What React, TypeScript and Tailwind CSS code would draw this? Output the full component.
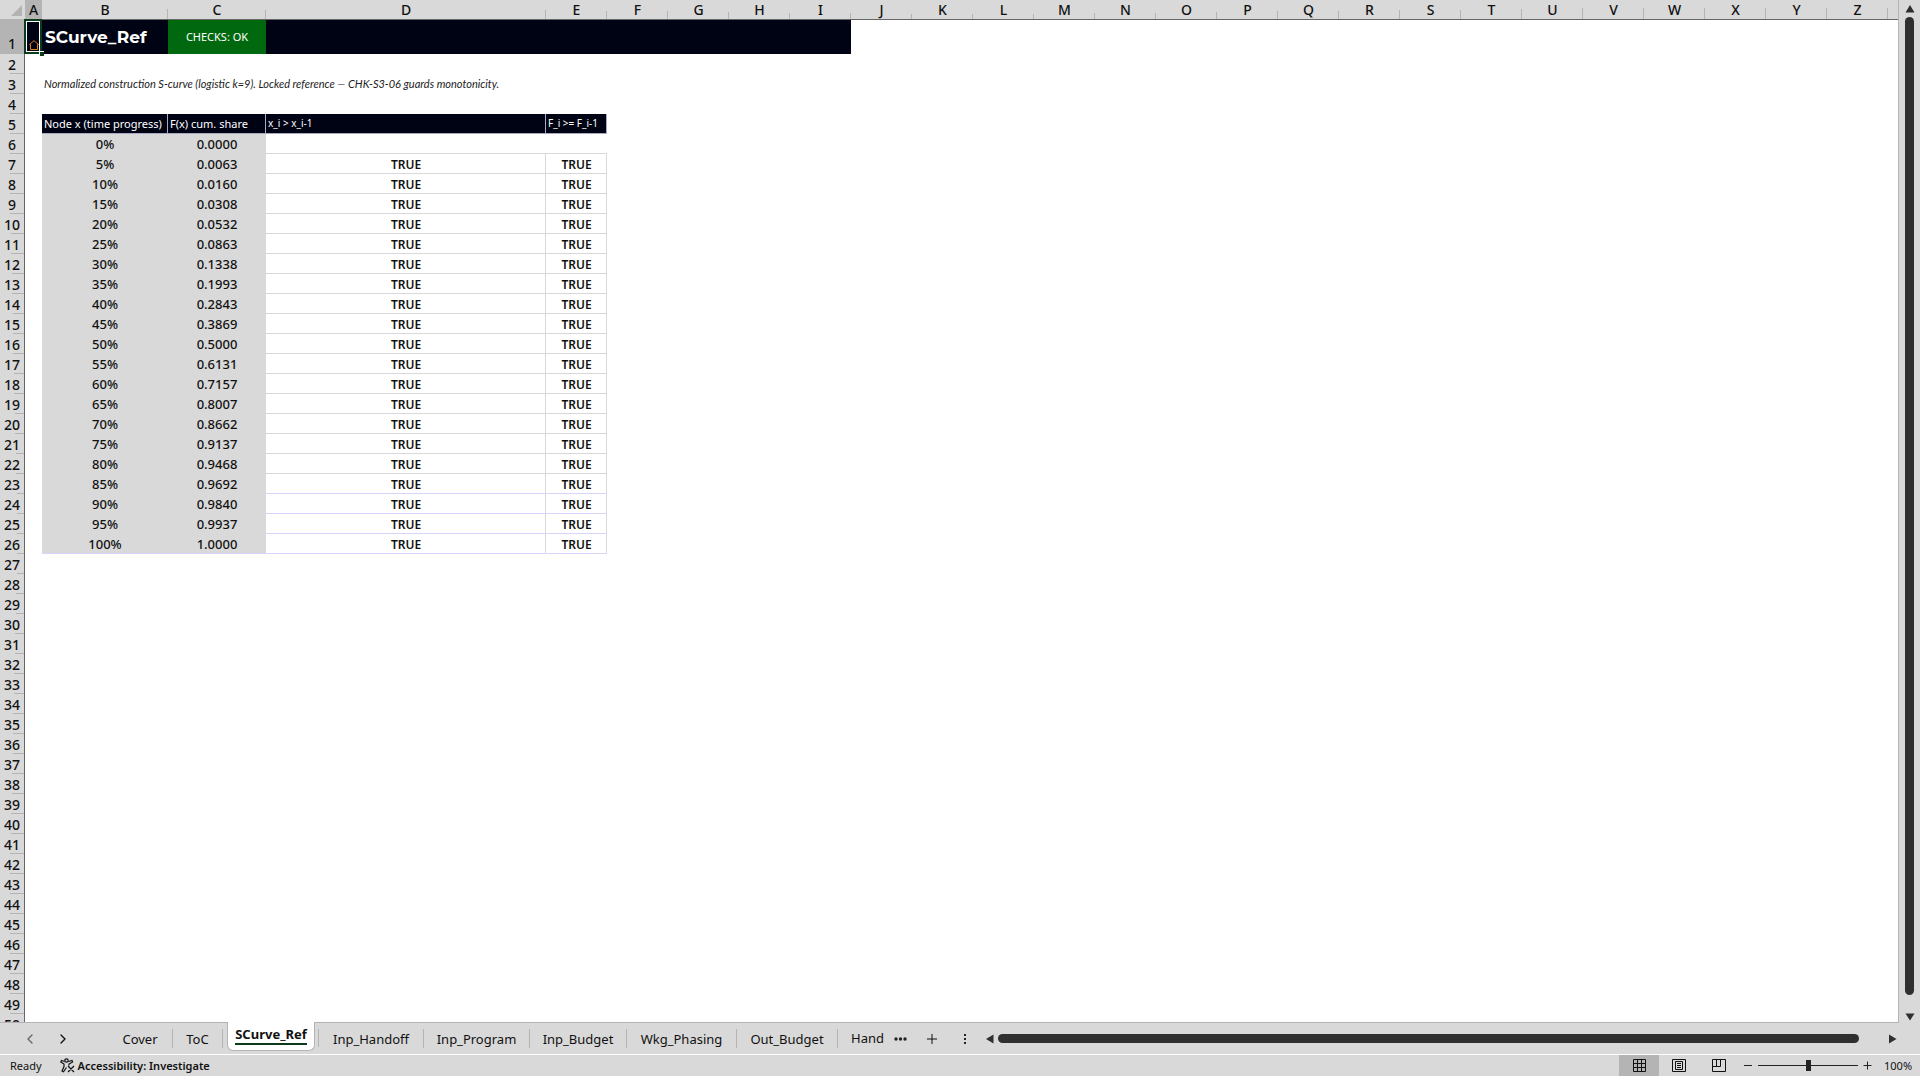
import type { CSSProperties } from "react";
import { ChevronLeft, ChevronRight, Plus } from "lucide-react";
import clsx from "clsx";

const columns = "ABCDEFGHIJKLMNOPQRSTUVWXYZ".split("");
const rowNumbers = Array.from({ length: 50 }, (_, i) => i + 1);

const shares = [
  "0.0000", "0.0063", "0.0160", "0.0308", "0.0532", "0.0863", "0.1338",
  "0.1993", "0.2843", "0.3869", "0.5000", "0.6131", "0.7157", "0.8007",
  "0.8662", "0.9137", "0.9468", "0.9692", "0.9840", "0.9937", "1.0000",
];

const nodes = shares.map((share, i) => ({ row: i + 6, node: `${i * 5}%`, share }));

const columnWidths: Record<string, string> = {
  A: "w-[17px]",
  B: "w-[126px]",
  C: "w-[98px]",
  D: "w-[280px]",
};

// header dividers shrink towards the middle of the sheet
const tickHeight = (i: number) => Math.min(11, 5 + Math.floor(Math.abs(i - 10) * 0.6));
const tickWidth = (row: number) => Math.min(14, 7 + Math.floor(Math.abs(row - 25) * 0.45));

function ColumnHeaders() {
  return (
    <thead>
      <tr className="h-5">
        <td className="relative border-b border-[#b4b4b4] bg-[#d9d9d9]">
          <svg className="absolute bottom-[3px] right-[3px]" width="11" height="11" aria-hidden="true">
            <path d="M11 0V11H0Z" fill="#b3b3b3" />
          </svg>
        </td>
        {columns.map((name, i) => (
          <th
            key={name}
            scope="col"
            className={clsx(
              "relative border-b border-[#666] p-0 text-[14px] font-medium leading-[19px]",
              name === "A" ? "bg-[#b4b4b4]" : "bg-[#d9d9d9]"
            )}
          >
            {name}
            <span
              className="absolute bottom-0 right-0 w-px bg-[#b4b4b4]"
              style={{ height: tickHeight(i) } as CSSProperties}
            />
          </th>
        ))}
        <td className="border-b border-[#666] bg-[#d9d9d9]" />
      </tr>
    </thead>
  );
}

function RowHeader({ row }: { row: number }) {
  return (
    <th
      scope="row"
      className={clsx(
        "relative border-r border-[#666] p-0 text-center align-bottom text-[14px] font-medium leading-[19px]",
        row === 1 ? "bg-[#b4b4b4] pb-px" : "bg-[#d9d9d9]"
      )}
    >
      {row}
      <span
        className="absolute bottom-0 right-0 h-px bg-[#b4b4b4]"
        style={{ width: tickWidth(row) } as CSSProperties}
      />
    </th>
  );
}

function TitleCells() {
  return (
    <>
      <td className="relative bg-[#000314] p-0">
        <a
          href="#toc"
          aria-label="Back to contents"
          className="absolute -left-px -top-px flex h-[35px] w-[18px] items-end justify-end border-2 border-[#0c3b1b] outline-1 -outline-offset-3 outline-white"
        >
          <svg width="10" height="10" viewBox="0 0 10 10" fill="none" stroke="#e07b10" className="mb-0.5 mr-px shrink-0" aria-hidden="true">
            <path d="M1.5 9.500V4.500H.5L5 .7L9.500 4.500H8.500V9.500Z" />
          </svg>
        </a>
        <span className="absolute -bottom-0.5 -right-0.5 z-10 size-[5px] border-l border-t border-white bg-[#0c3b1b]" />
      </td>
      <td className="bg-[#000314] p-0 pb-px pl-[3px] font-['Montserrat','Inter',sans-serif] text-[17px] font-bold leading-6 text-white">
        SCurve_Ref
      </td>
      <td className="bg-[#00690f] p-0 text-center text-[11px] text-white">CHECKS: OK</td>
      <td colSpan={6} className="bg-[#000314]" />
    </>
  );
}

function HeadingCells() {
  const cell = "whitespace-nowrap border-b border-r border-[#a9a9c0] bg-[#000314] p-0 pl-0.5 text-left leading-[19px] text-white";
  return (
    <>
      <td />
      <td className={clsx(cell, "text-[11px]")}>Node x (time progress)</td>
      <td className={clsx(cell, "text-[11px]")}>F(x) cum. share</td>
      <td className={clsx(cell, "text-[10px]")}>x_i &gt; x_i-1</td>
      <td className={clsx(cell, "text-[10px]")}>F_i &gt;= F_i-1</td>
    </>
  );
}

function NodeCells({ row, node, share }: { row: number; node: string; share: string }) {
  const line = row > 22 ? "border-b-[#d6d6fa]" : "border-b-[#d9d9d9]";
  const value = clsx(
    "border-b bg-[#d9d9d9] p-0 pt-0.5 text-center text-[13px] font-medium leading-[17px]",
    row === 26 ? "border-b-[#d6d6fa]" : "border-b-[#d9d9d9]"
  );
  const check = clsx(
    "border-b border-r border-r-[#d9d9d9] p-0 pt-0.5 pl-px text-center text-[12px] font-semibold leading-[17px]",
    line
  );
  return (
    <>
      <td />
      <td className={value}>{node}</td>
      <td className={value}>{share}</td>
      {row === 6 ? (
        <td colSpan={2} className="border-b border-b-[#d9d9d9]" />
      ) : (
        <>
          <td className={check}>TRUE</td>
          <td className={check}>TRUE</td>
        </>
      )}
    </>
  );
}

function Sheet() {
  return (
    <div className="min-w-0 flex-1 overflow-hidden border-b border-r border-[#b4b4b4] bg-white">
      <table className="w-full table-fixed border-separate border-spacing-0">
        <colgroup>
          <col className="w-[25px]" />
          {columns.map((name) => (
            <col key={name} className={columnWidths[name] ?? "w-[61px]"} />
          ))}
          <col />
        </colgroup>
        <ColumnHeaders />
        <tbody>
          {rowNumbers.map((row) => {
            const data = nodes.find((n) => n.row === row);
            return (
              <tr key={row} className={row === 1 ? "h-[34px]" : "h-5"}>
                <RowHeader row={row} />
                {row === 1 && <TitleCells />}
                {row === 3 && (
                  <>
                    <td />
                    <td colSpan={8} className="p-0 pl-0.5 font-['Lato',sans-serif] text-[11px] italic leading-[18px] text-[#222]">
                      Normalized construction S-curve (logistic k=9). Locked reference — CHK-S3-06 guards monotonicity.
                    </td>
                  </>
                )}
                {row === 5 && <HeadingCells />}
                {data && <NodeCells {...data} />}
              </tr>
            );
          })}
        </tbody>
      </table>
    </div>
  );
}

function VerticalScroll() {
  return (
    <div className="flex w-[21px] shrink-0 flex-col items-center pb-0.5 pt-[5px]">
      <button type="button" aria-label="Scroll up">
        <svg width="10" height="8" className="block"><path d="M5 0L9.500 7.500H.5Z" fill="#2f2f2f" /></svg>
      </button>
      <div className="mt-1 w-[9px] flex-1 rounded-full bg-[#2f2f2f]" />
      <button type="button" aria-label="Scroll down" className="mt-[18px]">
        <svg width="10" height="8" className="block"><path d="M5 7.500L9.500 .5H.5Z" fill="#2f2f2f" /></svg>
      </button>
    </div>
  );
}

const tabs = [
  { name: "Cover", width: "w-[65px]" },
  { name: "ToC", width: "w-[50px]" },
  { name: "SCurve_Ref", width: "w-[96px]" },
  { name: "Inp_Handoff", width: "w-[105px]" },
  { name: "Inp_Program", width: "w-[106px]" },
  { name: "Inp_Budget", width: "w-[97px]" },
  { name: "Wkg_Phasing", width: "w-[110px]" },
  { name: "Out_Budget", width: "w-[101px]" },
];

function TabBar() {
  return (
    <nav aria-label="Sheets" className="flex h-[31px] shrink-0 items-center text-[13px] leading-5">
      <button type="button" aria-label="Previous sheet" className="ml-[22px] text-[#666]">
        <ChevronLeft size={16} strokeWidth={2} />
      </button>
      <button type="button" aria-label="Next sheet" className="ml-[17px]">
        <ChevronRight size={16} strokeWidth={2} />
      </button>
      <div className="ml-[37px] flex h-full">
        {tabs.map(({ name, width }) =>
          name === "SCurve_Ref" ? (
            <div key={name} className={clsx("flex items-start", width)}>
              <button
                type="button"
                aria-current="page"
                className="-mt-px ml-1 h-[29px] w-[88px] rounded-b-md border border-t-0 border-[#b4b4b4] bg-white pb-1 font-bold"
              >
                <span className="border-b-2 border-[#0c3b1b]">{name}</span>
              </button>
              <i className="ml-[3px] mt-1.5 h-[18px] w-px bg-[#b4b4b4]" />
            </div>
          ) : (
            <button key={name} type="button" className={clsx("my-1.5 border-r border-[#b4b4b4] pb-0.5", width)}>
              {name}
            </button>
          )
        )}
        <button type="button" className="ml-[13px] pb-0.5">Hand</button>
      </div>
      <button type="button" aria-label="More sheets" className="ml-2.5">
        <svg width="13" height="4" className="block" fill="#222"><circle cx="2" cy="2" r="1.700" /><circle cx="6.500" cy="2" r="1.700" /><circle cx="11" cy="2" r="1.700" /></svg>
      </button>
      <button type="button" aria-label="New sheet" className="ml-[17px]">
        <Plus size={16} strokeWidth={1.5} />
      </button>
      <span className="ml-6 flex flex-col gap-0.5" aria-hidden="true">
        <i className="size-0.5 bg-[#222]" />
        <i className="size-0.5 bg-[#222]" />
        <i className="size-0.5 bg-[#222]" />
      </span>
      <button type="button" aria-label="Scroll left" className="ml-5">
        <svg width="8" height="10" className="block"><path d="M0 5L7.500 .5V9.500Z" fill="#2f2f2f" /></svg>
      </button>
      <div className="ml-1 h-[9px] flex-1 rounded-full bg-[#2f2f2f]" />
      <button type="button" aria-label="Scroll right" className="ml-[30px] mr-[23px]">
        <svg width="8" height="10" className="block"><path d="M7.500 5L0 .5V9.500Z" fill="#2f2f2f" /></svg>
      </button>
    </nav>
  );
}

function StatusBar() {
  return (
    <footer className="flex h-[22px] shrink-0 items-center border-t border-white text-[11px] leading-4">
      <span className="ml-2.5">Ready</span>
      <button type="button" className="ml-[18px] flex items-center gap-[3px] font-semibold">
        <svg width="15" height="15" viewBox="0 0 15 15" fill="none" stroke="#111" strokeWidth="1.200" aria-hidden="true">
          <circle cx="6.500" cy="2.500" r="1.700" />
          <path d="M4.500 3.500L1.500 2.500L.8 4L4 6V8.500L2 13L3.500 13.800L6.500 9.500M8.500 3.500L12 2.500L12.600 4L9 6V7.500M8 8L14 14M14 8L8 14" />
        </svg>
        Accessibility: Investigate
      </button>
      <div className="ml-auto flex h-full items-center">
        <button type="button" aria-label="Normal view" className="flex h-full w-10 items-center justify-center bg-[#b4b4b4]">
          <svg width="13" height="13" fill="none" stroke="#111"><path d="M.5 .5H12.500V12.500H.5ZM.5 4.500H12.500M.5 8.500H12.500M4.500 .5V12.500M8.500 .5V12.500" /></svg>
        </button>
        <button type="button" aria-label="Page layout" className="flex h-full w-10 items-center justify-center">
          <svg width="14" height="13" fill="none" stroke="#111"><path d="M.5 .5H13.500V12.500H.5ZM3.500 2.500H10.500V10.500H3.500ZM5 4.500H9M5 6.500H9M5 8.500H9" /></svg>
        </button>
        <button type="button" aria-label="Page break preview" className="flex h-full w-10 items-center justify-center">
          <svg width="14" height="13" fill="none" stroke="#111"><path d="M.5 .5H13.500V12.500H.5ZM.5 7.500H8.500V.5M4.500 .5V7.500" /></svg>
        </button>
        <button type="button" aria-label="Zoom out" className="ml-[5px] flex h-full w-[9px] items-center"><i className="h-px w-2 bg-[#222]" /></button>
        <input
          type="range"
          aria-label="Zoom"
          min={10}
          max={190}
          defaultValue={100}
          className="ml-[5px] h-[11px] w-[100px] appearance-none bg-[linear-gradient(#222,#222)] bg-[length:100%_1px] bg-center bg-no-repeat [&::-webkit-slider-thumb]:h-[11px] [&::-webkit-slider-thumb]:w-[5px] [&::-webkit-slider-thumb]:appearance-none [&::-webkit-slider-thumb]:bg-[#222]"
        />
        <button type="button" aria-label="Zoom in" className="ml-[5px]">
          <svg width="9" height="9" className="block" stroke="#222"><path d="M4.500 .5V8.500M.5 4.500H8.500" /></svg>
        </button>
        <span className="ml-3 mr-[7px] w-[29px]">100%</span>
      </div>
    </footer>
  );
}

export default function App() {
  return (
    <div className="flex h-screen flex-col bg-[#d9d9d9] font-['Noto_Sans','Open_Sans',sans-serif] text-[#111]">
      <main className="flex min-h-0 flex-1">
        <Sheet />
        <VerticalScroll />
      </main>
      <TabBar />
      <StatusBar />
    </div>
  );
}
